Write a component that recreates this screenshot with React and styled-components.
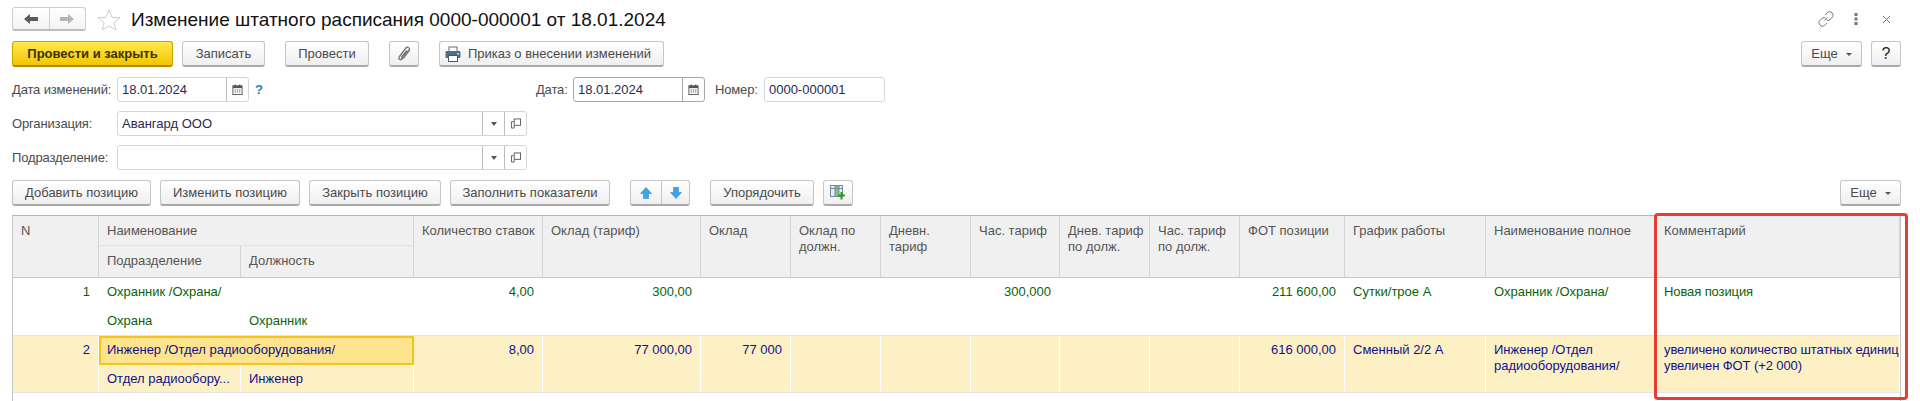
import React from 'react';
import styled, { createGlobalStyle, css } from 'styled-components';

const Global = createGlobalStyle`
  html, body { margin: 0; padding: 0; background: #fff; }
  body { font-family: "Liberation Sans", Arial, sans-serif; font-size: 13px; color: #4b4b4b; overflow: hidden; }
`;

const Page = styled.div`
  width: 1920px;
  height: 401px;
  box-sizing: border-box;
  padding: 7px 19px 0 12px;
  overflow: hidden;
`;
const Row = styled.div`
  display: flex;
  align-items: flex-start;
  height: ${p => p.$h || 25}px;
  margin-top: ${p => p.$mt || 0}px;
`;
const Push = styled.div`margin-left: auto; display: flex; align-items: center;`;
const Gap = styled.div`width: ${p => p.$w}px; flex: none;`;

const NavGroup = styled.div`
  display: flex;
  width: 74px;
  height: 24px;
  box-sizing: border-box;
  border: 1px solid #cfcfcf;
  border-bottom: 2px solid #bdbdbd;
  border-radius: 3px;
  background: linear-gradient(#fff, #f3f3f3);
`;
const NavCell = styled.div`
  flex: 1;
  display: flex;
  align-items: center;
  justify-content: center;
  & + & { border-left: 1px solid #d2d2d2; }
`;
const StarWrap = styled.div`width: 24px; height: 22px; margin: 2px 10px 0 11px; flex: none;`;
const Title = styled.h1`
  margin: 1px 0 0;
  font-weight: 400;
  font-size: 19px;
  line-height: 24px;
  color: #111;
  white-space: nowrap;
`;
const TopIcon = styled.div`
  width: 30px;
  height: 24px;
  display: flex;
  align-items: center;
  justify-content: center;
`;

const Button = styled.button`
  box-sizing: border-box;
  width: ${p => p.$w}px;
  height: 26px;
  padding: 0 ${p => p.$pr || 0}px 0 0;
  flex: none;
  display: flex;
  align-items: center;
  justify-content: center;
  gap: 7px;
  font: 13px "Liberation Sans", Arial, sans-serif;
  color: #4a4a4a;
  background: linear-gradient(#ffffff, #efefef);
  border: 1px solid #c6c6c6;
  border-bottom: 2px solid #a9a9a9;
  border-radius: 3px;
  ${p => p.$primary && css`
    color: #3a3300;
    font-weight: 700;
    background: linear-gradient(#ffe94f, #f4c500);
    border-color: #c8a400;
    border-bottom-color: #ab8c00;
  `}
  ${p => p.$big && css`font-size: 16px; color: #222;`}
`;
const Caret = styled.span`
  width: 0; height: 0;
  border: 3px solid transparent;
  border-top: 3px solid #555;
  border-bottom: 0;
  margin-left: 1px;
  margin-top: 1px;
`;
const SplitButton = styled.div`
  display: flex;
  flex: none;
  box-sizing: border-box;
  width: ${p => p.$w}px;
  height: 26px;
  border: 1px solid #c6c6c6;
  border-bottom: 2px solid #a9a9a9;
  border-radius: 3px;
  background: linear-gradient(#fff, #efefef);
`;
const SplitCell = styled.div`
  flex: ${p => p.$w ? 'none' : 1};
  width: ${p => p.$w ? `${p.$w}px` : 'auto'};
  display: flex;
  align-items: center;
  justify-content: center;
  & + & { border-left: 1px solid #c6c6c6; }
`;

const Label = styled.label`
  flex: none;
  width: ${p => p.$w}px;
  line-height: 25px;
  color: #4b4b4b;
  white-space: nowrap;
  letter-spacing: -0.15px;
`;
const Field = styled.div`
  flex: none;
  display: flex;
  box-sizing: border-box;
  width: ${p => p.$w}px;
  height: 25px;
  border: 1px solid ${p => p.$dark ? '#a8a8a8' : '#d6d6d6'};
  border-radius: 3px;
  background: #fff;
`;
const FieldText = styled.div`
  flex: 1;
  min-width: 0;
  padding-left: 4px;
  line-height: 24px;
  color: #2a2a50;
`;
const FieldBtn = styled.div`
  flex: none;
  width: ${p => p.$w}px;
  display: flex;
  align-items: center;
  justify-content: center;
  border-left: 1px solid ${p => p.$dark ? '#a8a8a8' : '#bdbdbd'};
`;
const Help = styled.span`
  color: #1a7fc4;
  font-weight: 700;
  font-size: 13px;
  line-height: 25px;
  margin-left: 6px;
`;

const Table = styled.div`
  position: relative;
  box-sizing: border-box;
  width: 1889px;
  height: 187px;
  margin-top: 9px;
  border: 1px solid #c4c4c4;
  border-top: 1px solid #b4b4b4;
  border-bottom: 0;
`;
const TableGrid = styled.div`
  display: grid;
  grid-template-columns: 86px 142px 173px 129px 158px 90px 90px 90px 89px 90px 90px 105px 141px 170px 244px;
  grid-template-rows: 30px 32px 29px 29px 29px 28px;
`;
const cellPlace = css`
  grid-column: ${p => p.$col} / span ${p => p.$cs || 1};
  grid-row: ${p => p.$row} / span ${p => p.$rs || 1};
  box-sizing: border-box;
  min-width: 0;
  overflow: hidden;
`;
const HeadCell = styled.div`
  ${cellPlace}
  padding: 7px 2px 0 8px;
  line-height: 16px;
  background: #f0f0f0;
  color: #555;
  border-right: 1px solid #d4d4d4;
  border-bottom: 1px solid ${p => p.$inner ? '#e2e2e2' : '#c8c8c8'};
`;
const BodyCell = styled.div`
  ${cellPlace}
  padding: 6px 8px 0 8px;
  line-height: 16px;
  white-space: pre-line;
  text-align: ${p => p.$right ? 'right' : 'left'};
  color: ${p => p.$tone === 'blue' ? '#10108c' : '#0a640a'};
  background: ${p => p.$tone === 'blue' ? '#fdf0c5' : '#fff'};
  border-right: 1px solid #fff;
  border-bottom: ${p => p.$last ? '1px solid #e4e4e4' : '0'};
`;
const Lines = styled.div`
  white-space: pre;
  overflow: hidden;
  margin-right: -8px;
  letter-spacing: -0.1px;
`;
const NoWrap = styled.div`white-space: nowrap; overflow: hidden;`;
const ActiveCell = styled(BodyCell)`
  padding: 4px 6px 0 6px;
  background: #ffe48f;
  border: 2px solid #f6c41a;
`;
const Highlight = styled.div`
  position: absolute;
  left: 1641px;
  top: -3px;
  width: 254px;
  height: 187px;
  box-sizing: border-box;
  border: 3px solid #e53c35;
  border-radius: 4px;
  pointer-events: none;
`;

/* icons */
const ArrowLeft = ({ c }) => (
  <svg width="14" height="12" viewBox="0 0 14 12"><path d="M0 6 L6 1 V4 H14 V8 H6 V11 Z" fill={c} /></svg>
);
const ArrowRight = ({ c }) => (
  <svg width="14" height="12" viewBox="0 0 14 12"><path d="M14 6 L8 1 V4 H0 V8 H8 V11 Z" fill={c} /></svg>
);
const Star = () => (
  <svg width="24" height="22" viewBox="0 0 24 22">
    <path d="M12 1 L15 8.3 L23 8.8 L16.8 13.8 L18.9 21 L12 17 L5.1 21 L7.2 13.8 L1 8.8 L9 8.3 Z" fill="#fff" stroke="#c9ced3" strokeWidth="1" />
  </svg>
);
const Clip = () => (
  <svg width="14" height="16" viewBox="0 0 14 16" fill="none" stroke="#777" strokeWidth="1.3" strokeLinecap="round">
    <path d="M11.5 4.5 L5.5 12.5 C3.5 15 0.8 13 2.5 10.5 L8.5 2.5 C10.5 0 13.8 2 12 5 L6.5 12 C5.5 13 4 12 5 10.5 L9.5 5" />
  </svg>
);
const Printer = () => (
  <svg width="16" height="16" viewBox="0 0 16 16">
    <rect x="4" y="1" width="8" height="5" fill="#fff" stroke="#56707f" />
    <rect x="0.5" y="5" width="15" height="7" rx="1" fill="#4f6f86" />
    <rect x="12" y="7" width="2" height="1.5" fill="#bfe0f2" />
    <rect x="3.5" y="9.5" width="9" height="6" fill="#fff" stroke="#3f5a6e" />
  </svg>
);
const Calendar = () => (
  <svg width="11" height="11" viewBox="0 0 12 12">
    <rect x="1" y="2" width="10" height="9.5" fill="#fff" stroke="#555" />
    <rect x="1" y="2" width="10" height="2.5" fill="#555" />
    <rect x="3" y="0.5" width="1.2" height="2.5" fill="#555" />
    <rect x="7.8" y="0.5" width="1.2" height="2.5" fill="#555" />
    <path d="M3 6h1.2v1H3zM5.4 6h1.2v1H5.4zM7.8 6H9v1H7.8zM3 8.3h1.2v1H3zM5.4 8.3h1.2v1H5.4zM7.8 8.3H9v1H7.8z" fill="#555" />
  </svg>
);
const Drop = () => (
  <svg width="6" height="4" viewBox="0 0 6 4"><path d="M0 0 H6 L3 4 Z" fill="#555" /></svg>
);
const OpenIcon = () => (
  <svg width="10" height="11" viewBox="0 0 11 11" fill="none" stroke="#555">
    <rect x="3.5" y="0.5" width="7" height="7" fill="#fff" />
    <path d="M3 3.5 H0.5 V10.5 H3.5 V8" />
  </svg>
);
const ArrowUp = () => (
  <svg width="12" height="12" viewBox="0 0 12 12"><path d="M6 0.5 L11.5 6.5 H8.5 V11.5 H3.5 V6.5 H0.5 Z" fill="#3fa4e6" stroke="#2f86c4" strokeWidth="0.6" /></svg>
);
const ArrowDown = () => (
  <svg width="12" height="12" viewBox="0 0 12 12"><path d="M6 11.5 L11.5 5.5 H8.5 V0.5 H3.5 V5.5 H0.5 Z" fill="#3fa4e6" stroke="#2f86c4" strokeWidth="0.6" /></svg>
);
const TableAdd = () => (
  <svg width="16" height="15" viewBox="0 0 16 15">
    <rect x="0.5" y="0.5" width="12" height="11" fill="#e4eef6" stroke="#6d8ca3" />
    <rect x="5" y="1" width="4" height="10" fill="#8cc06e" />
    <path d="M1 3.5 H12 M5 1 V11 M9 1 V11" stroke="#6d8ca3" fill="none" />
    <path d="M10.5 7 H12.5 V9.5 H15 V11.5 H12.5 V14.5 H10.5 V11.5 H8 V9.5 H10.5 Z" fill="#2f9a1f" />
  </svg>
);
const LinkIcon = () => (
  <svg width="16" height="16" viewBox="0 0 16 16" fill="none" stroke="#777" strokeWidth="1">
    <path d="M6.5 9.5 L9.5 6.5" />
    <path d="M7 4 L9.5 1.6 C11 0.3 12.8 0.6 14 1.9 C15.3 3.2 15.5 5 14.3 6.3 L11.8 8.8 C10.6 9.9 9 9.6 8.4 8.8" />
    <path d="M9 12 L6.5 14.4 C5 15.7 3.2 15.4 2 14.1 C0.7 12.8 0.5 11 1.7 9.7 L4.2 7.2 C5.4 6.1 7 6.4 7.6 7.2" />
  </svg>
);
const Dots = () => (
  <svg width="4" height="12" viewBox="0 0 4 12" fill="#777">
    <rect x="0.5" y="0" width="3" height="3" /><rect x="0.5" y="4.5" width="3" height="3" /><rect x="0.5" y="9" width="3" height="3" />
  </svg>
);
const CloseIcon = () => (
  <svg width="9" height="9" viewBox="0 0 9 9" stroke="#777" strokeWidth="1"><path d="M1 1 L8 8 M8 1 L1 8" /></svg>
);

const headers = [
  { col: 4, t: 'Количество ставок' },
  { col: 5, t: 'Оклад (тариф)' },
  { col: 6, t: 'Оклад' },
  { col: 7, t: 'Оклад по должн.' },
  { col: 8, t: 'Дневн. тариф' },
  { col: 9, t: 'Час. тариф' },
  { col: 10, t: 'Днев. тариф по долж.' },
  { col: 11, t: 'Час. тариф по долж.' },
  { col: 12, t: 'ФОТ позиции' },
  { col: 13, t: 'График работы' },
  { col: 14, t: 'Наименование полное' },
  { col: 15, t: 'Комментарий' },
];

const rows = [
  {
    tone: 'green', row: 3, n: '1', name: 'Охранник /Охрана/', sub: 'Охрана', pos: 'Охранник',
    cells: { 4: '4,00', 5: '300,00', 6: '', 7: '', 8: '', 9: '300,000', 10: '', 11: '', 12: '211 600,00', 13: 'Сутки/трое А', 14: 'Охранник /Охрана/', 15: 'Новая позиция' },
  },
  {
    tone: 'blue', row: 5, n: '2', name: 'Инженер /Отдел радиооборудования/', sub: 'Отдел радиообору...', pos: 'Инженер', active: true,
    cells: { 4: '8,00', 5: '77 000,00', 6: '77 000', 7: '', 8: '', 9: '', 10: '', 11: '', 12: '616 000,00', 13: 'Сменный 2/2 А', 14: 'Инженер /Отдел радиооборудования/', 15: 'увеличено количество штатных единиц\nувеличен ФОТ (+2 000)' },
  },
];
const numeric = [4, 5, 6, 7, 8, 9, 10, 11, 12];

export default function App() {
  return (
    <Page>
      <Global />
      <Row $h={24}>
        <NavGroup>
          <NavCell><ArrowLeft c="#5a5a5a" /></NavCell>
          <NavCell><ArrowRight c="#b5b5b5" /></NavCell>
        </NavGroup>
        <StarWrap><Star /></StarWrap>
        <Title>Изменение штатного расписания 0000-000001 от 18.01.2024</Title>
        <Push>
          <TopIcon><LinkIcon /></TopIcon>
          <TopIcon><Dots /></TopIcon>
          <TopIcon><CloseIcon /></TopIcon>
        </Push>
      </Row>
      <Row $h={26} $mt={10}>
        <Button $primary $w={161}>Провести и закрыть</Button>
        <Gap $w={9} />
        <Button $w={83}>Записать</Button>
        <Gap $w={20} />
        <Button $w={84}>Провести</Button>
        <Gap $w={20} />
        <Button $w={30}><Clip /></Button>
        <Gap $w={20} />
        <Button $w={225} $pr={7}><Printer />Приказ о внесении изменений</Button>
        <Push>
          <Button $w={61}>Еще<Caret /></Button>
          <Gap $w={9} />
          <Button $w={30} $big>?</Button>
        </Push>
      </Row>
      <Row $mt={10}>
        <Label $w={105}>Дата изменений:</Label>
        <Field $w={132}>
          <FieldText>18.01.2024</FieldText>
          <FieldBtn $w={21}><Calendar /></FieldBtn>
        </Field>
        <Help>?</Help>
        <Gap $w={273} />
        <Label $w={37}>Дата:</Label>
        <Field $w={132} $dark>
          <FieldText>18.01.2024</FieldText>
          <FieldBtn $w={21} $dark><Calendar /></FieldBtn>
        </Field>
        <Gap $w={10} />
        <Label $w={49}>Номер:</Label>
        <Field $w={121}><FieldText>0000-000001</FieldText></Field>
      </Row>
      <Row $mt={9}>
        <Label $w={105}>Организация:</Label>
        <Field $w={410}>
          <FieldText>Авангард ООО</FieldText>
          <FieldBtn $w={21}><Drop /></FieldBtn>
          <FieldBtn $w={21}><OpenIcon /></FieldBtn>
        </Field>
      </Row>
      <Row $mt={9}>
        <Label $w={105}>Подразделение:</Label>
        <Field $w={410}>
          <FieldText />
          <FieldBtn $w={21}><Drop /></FieldBtn>
          <FieldBtn $w={21}><OpenIcon /></FieldBtn>
        </Field>
      </Row>
      <Row $h={26} $mt={10}>
        <Button $w={139}>Добавить позицию</Button>
        <Gap $w={9} />
        <Button $w={140}>Изменить позицию</Button>
        <Gap $w={9} />
        <Button $w={132}>Закрыть позицию</Button>
        <Gap $w={9} />
        <Button $w={160}>Заполнить показатели</Button>
        <Gap $w={20} />
        <SplitButton $w={60}>
          <SplitCell $w={30}><ArrowUp /></SplitCell>
          <SplitCell><ArrowDown /></SplitCell>
        </SplitButton>
        <Gap $w={20} />
        <Button $w={104}>Упорядочить</Button>
        <Gap $w={9} />
        <Button $w={30}><TableAdd /></Button>
        <Push><Button $w={61}>Еще<Caret /></Button></Push>
      </Row>
      <Table>
        <TableGrid>
          <HeadCell $col={1} $row={1} $rs={2}>N</HeadCell>
          <HeadCell $col={2} $cs={2} $row={1} $inner>Наименование</HeadCell>
          <HeadCell $col={2} $row={2}>Подразделение</HeadCell>
          <HeadCell $col={3} $row={2}>Должность</HeadCell>
          {headers.map(h => (
            <HeadCell key={h.col} $col={h.col} $row={1} $rs={2}>{h.t}</HeadCell>
          ))}
          {rows.map(r => {
            const Name = r.active ? ActiveCell : BodyCell;
            return (
              <React.Fragment key={r.n}>
                <BodyCell $tone={r.tone} $last $col={1} $row={r.row} $rs={2} $right>{r.n}</BodyCell>
                <Name $tone={r.tone} $col={2} $cs={2} $row={r.row}><NoWrap>{r.name}</NoWrap></Name>
                <BodyCell $tone={r.tone} $last $col={2} $row={r.row + 1}><NoWrap>{r.sub}</NoWrap></BodyCell>
                <BodyCell $tone={r.tone} $last $col={3} $row={r.row + 1}>{r.pos}</BodyCell>
                {Object.entries(r.cells).map(([col, text]) => (
                  <BodyCell key={col} $tone={r.tone} $last $col={+col} $row={r.row} $rs={2} $right={numeric.includes(+col)}>
                    {+col === 15 ? <Lines>{text}</Lines> : text}
                  </BodyCell>
                ))}
              </React.Fragment>
            );
          })}
        </TableGrid>
        <Highlight />
      </Table>
    </Page>
  );
}
